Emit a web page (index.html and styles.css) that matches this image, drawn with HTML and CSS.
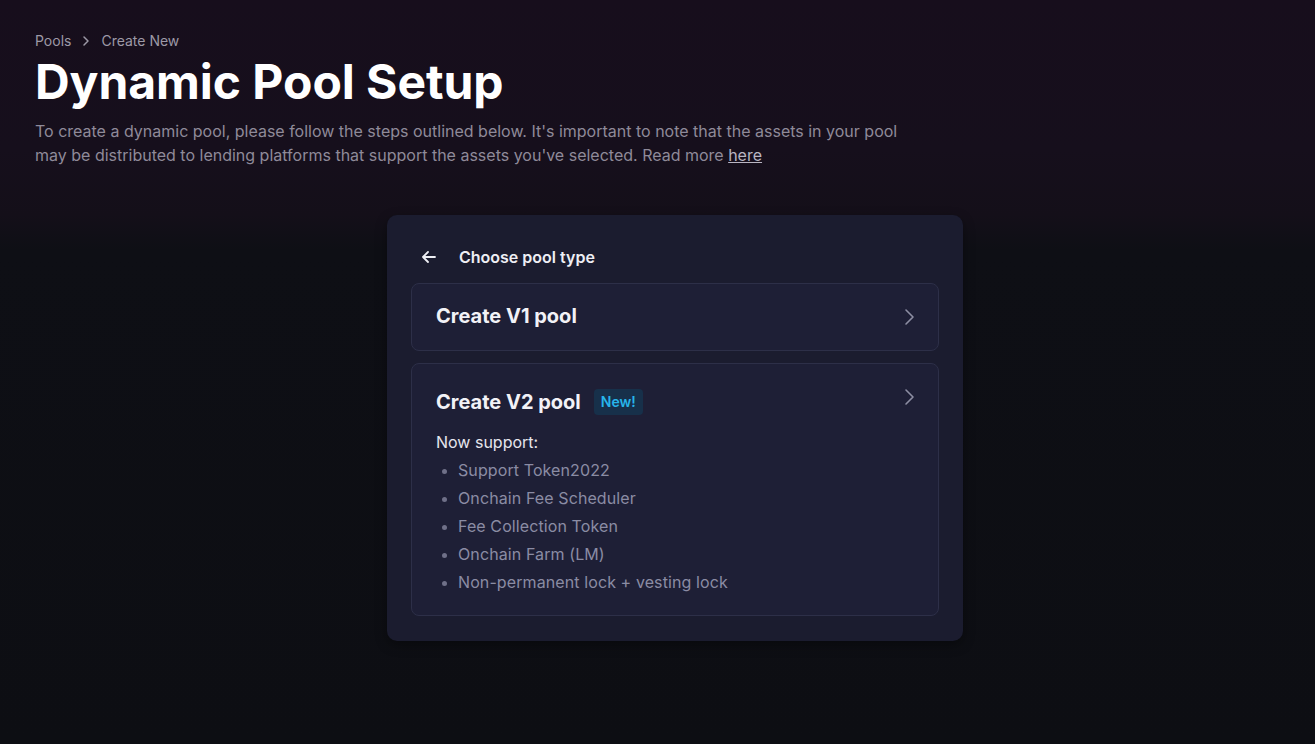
FILE: index.html
```html
<!DOCTYPE html>
<html lang="en">
<head>
<meta charset="utf-8">
<title>Dynamic Pool Setup</title>
<link rel="stylesheet" href="styles.css">
</head>
<body>
<div class="page">
  <div class="hero">
    <nav class="crumbs">
      <span>Pools</span>
      <svg class="crumb-sep" width="16" height="16" viewBox="0 0 16 16"><path d="M6 4l4 4-4 4" fill="none" stroke="currentColor" stroke-width="1.5" stroke-linecap="round" stroke-linejoin="round"/></svg>
      <span>Create New</span>
    </nav>
    <h1 class="title">Dynamic Pool Setup</h1>
    <p class="desc">To create a dynamic pool, please follow the steps outlined below. It's important to note that the assets in your pool may be distributed to lending platforms that support the assets you've selected. Read more <a href="#" class="link">here</a></p>
  </div>
  <main class="main">
    <section class="card">
      <div class="card-head">
        <svg class="back" width="18" height="18" viewBox="0 0 18 18"><path d="M15 9H3.5M8 4L3 9l5 5" fill="none" stroke="currentColor" stroke-width="1.8" stroke-linecap="round" stroke-linejoin="round"/></svg>
        <span class="head-title">Choose pool type</span>
      </div>
      <div class="option option-v1">
        <span class="opt-title">Create V1 pool</span>
        <svg class="chev" width="20" height="20" viewBox="0 0 20 20"><path d="M7 3l7 7-7 7" fill="none" stroke="currentColor" stroke-width="1.6" stroke-linecap="round" stroke-linejoin="round"/></svg>
      </div>
      <div class="option option-v2">
        <div class="opt-body">
          <div class="opt-row">
            <span class="opt-title">Create V2 pool</span>
            <span class="badge">New!</span>
          </div>
          <div class="support">Now support:</div>
          <ul class="features">
            <li>Support Token2022</li>
            <li>Onchain Fee Scheduler</li>
            <li>Fee Collection Token</li>
            <li>Onchain Farm (LM)</li>
            <li>Non-permanent lock + vesting lock</li>
          </ul>
        </div>
        <svg class="chev chev-top" width="20" height="20" viewBox="0 0 20 20"><path d="M7 3l7 7-7 7" fill="none" stroke="currentColor" stroke-width="1.6" stroke-linecap="round" stroke-linejoin="round"/></svg>
      </div>
    </section>
  </main>
</div>
</body>
</html>
```

FILE: styles.css
```css
* { box-sizing: border-box; }
html, body { margin: 0; padding: 0; }
body {
  font-family: Inter, "Noto Sans", sans-serif;
  background: #0d0e13;
  color: #e8e8f0;
  min-height: 744px;
}
.page {
  min-height: 744px;
  background:
    linear-gradient(180deg, #170e1c 0px, #160f1c 150px, #140f19 215px, #0e0f15 250px, #0d0e13 744px);
}
.hero {
  padding: 31px 35px 0 35px;
}
.crumbs {
  display: flex;
  align-items: center;
  gap: 7px;
  font-size: 14px;
  line-height: 20px;
  color: #9d99a6;
}
.crumb-sep { color: #9d99a6; }
.title {
  margin: 3px 0 0 0;
  font-size: 48px;
  line-height: 56px;
  font-weight: 700;
  color: #ffffff;
  letter-spacing: -0.05px;
}
.desc {
  margin: 9px 0 0 0;
  max-width: 880px;
  font-size: 16px;
  line-height: 24px;
  color: #8f8a99;
}
.link {
  color: #b9b5c2;
  text-decoration: underline;
}
.main {
  padding: 48px 0 0 35px;
  display: flex;
  justify-content: center;
}
.card {
  width: 576px;
  background: #1b1c2f;
  border-radius: 10px;
  padding: 24px 24px 25px 24px;
  box-shadow: 0 4px 12px rgba(0,0,0,0.35);
}
.card-head {
  height: 36px;
  display: flex;
  align-items: center;
  gap: 21px;
  padding-left: 9px;
  margin-bottom: 8px;
  color: #eeeef4;
}
.head-title {
  font-size: 16px;
  font-weight: 600;
}
.option {
  display: flex;
  justify-content: space-between;
  border: 1px solid #2d2f48;
  border-radius: 8px;
  background: #1e1f36;
  padding: 18px 19px 19px 24px;
}
.option-v1 { align-items: center; }
.option-v2 {
  margin-top: 12px;
  align-items: flex-start;
  padding-top: 24px;
  padding-bottom: 19px;
}
.opt-title {
  font-size: 20px;
  line-height: 29px;
  font-weight: 700;
  color: #f2f2f7;
}
.chev { color: #8d8ea3; }
.chev-top { margin-top: -1px; }
.opt-row {
  display: flex;
  align-items: center;
  gap: 13px;
  height: 28px;
}
.badge {
  font-size: 14px;
  font-weight: 600;
  line-height: 26px;
  padding: 0 7px;
  border-radius: 4px;
  background: #17304a;
  color: #27b5ea;
}
.support {
  margin-top: 14px;
  font-size: 16px;
  line-height: 24px;
  color: #e6e6ee;
}
.features {
  margin: 2px 0 0 0;
  padding: 0 0 0 22px;
  font-size: 16px;
  line-height: 28px;
  letter-spacing: 0.1px;
  color: #8b8ca4;
}
.features li::marker { color: #6f7088; font-size: 14px; }
```
